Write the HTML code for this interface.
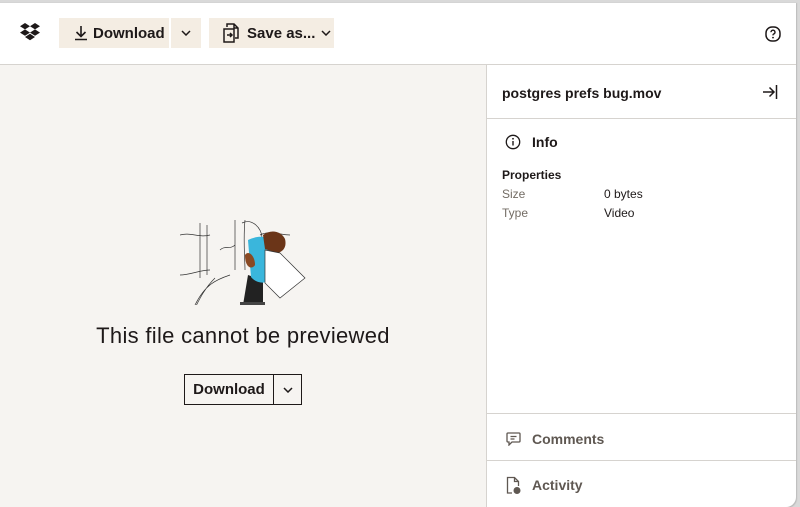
<!DOCTYPE html>
<html><head><style>
body{margin:0;width:800px;height:507px;background:#d9d9d9;font-family:"Liberation Sans",sans-serif;overflow:hidden;position:relative}
.win{position:absolute;left:0;top:2px;width:796px;height:504px;background:#fff;border-top:1px solid #d4d4d4;border-radius:0 0 10px 0;overflow:hidden;box-shadow:1px 1px 1px #bbb}
.hdr{position:absolute;left:0;top:0;right:0;height:61px;border-bottom:1px solid #d6d3cf}
.btn{position:absolute;top:15px;height:30px;background:#f4ede3;color:#1e1919;font-size:15px;font-weight:bold;display:flex;align-items:center}
.left{position:absolute;left:0;top:62px;width:486px;bottom:0;background:#f6f4f1}
.right{position:absolute;left:486px;top:62px;right:0;bottom:0;border-left:1px solid #d6d3cf}
.t{position:absolute;color:#1e1919}
.line{position:absolute;left:0;right:0;height:1px;background:#d6d3cf}
</style></head><body>
<div class="win">
<div class="hdr">
<svg style="position:absolute;left:20px;top:20px" width="21" height="19" viewBox="0 0 21 19"><g fill="#1e1919"><path d="M5 0L0 3.2 5 6.4 10 3.2zM15 0L10 3.2 15 6.4 20 3.2zM0 9.6L5 12.8 10 9.6 5 6.4zM15 6.4L10 9.6 15 12.8 20 9.6zM5 14L10 17.2 15 14 10 10.8z"/></g></svg>
<div class="btn" style="left:59px;width:110px"><svg style="margin-left:15px;margin-right:5px" width="14" height="16" viewBox="0 0 14 16"><path d="M7 1v10M2.5 7l4.5 4.5L11.5 7M1 14.5h12" stroke="#1e1919" stroke-width="1.6" fill="none"/></svg>Download</div>
<div class="btn" style="left:171px;width:30px;justify-content:center"><svg width="10" height="6"><path d="M1 1l4 4 4-4" stroke="#1e1919" stroke-width="1.5" fill="none"/></svg></div>
<div class="btn" style="left:209px;width:125px"><svg style="margin-left:13px;margin-right:7px" width="18" height="20" viewBox="0 0 18 20"><path d="M5 4V1h7l4 4v10h-3M12 1v4h4M2 6h10v13H2zM5 12h5M8 10l2 2-2 2" stroke="#1e1919" stroke-width="1.5" fill="none"/></svg>Save as...<svg style="margin-left:6px" width="10" height="6"><path d="M1 1l4 4 4-4" stroke="#1e1919" stroke-width="1.5" fill="none"/></svg></div>
<svg style="position:absolute;left:765px;top:23px" width="16" height="16" viewBox="0 0 16 16"><rect x="1" y="1" width="14" height="14" rx="6" stroke="#1e1919" stroke-width="1.5" fill="none"/><path d="M6 6.2a2 2 0 1 1 2.5 1.9c-.5.2-.5.6-.5 1.3" stroke="#1e1919" stroke-width="1.4" fill="none"/><circle cx="8" cy="11.6" r=".9" fill="#1e1919"/></svg>
</div>
<div class="left">
<svg style="position:absolute;left:180px;top:155px" width="130" height="85" viewBox="0 0 130 85">
<g stroke="#333" stroke-width=".7" fill="none"><path d="M0 15c10-3 20 3 30 0M20 3v55M27 5v50M40 30c5-5 10 0 15-5M55 0v50M62 3c10-5 20 5 20 15M65 0c-2 20 0 40 0 50M80 15c10-5 20 0 30 0M0 55c10 0 20-5 30-5M35 58c-10 10-15 20-20 30M15 85c10-20 20-25 35-30"/></g>
<path d="M68 55l15 5v25H63z" fill="#222"/>
<rect x="60" y="82" width="25" height="3" fill="#444"/>
<path d="M68 20c10-5 20-4 25 2l-2 38c-8 5-16 2-20-3z" fill="#3ab6dc"/>
<path d="M83 15c8-6 18-4 22 4 2 8-2 13-8 14l-12-4z" fill="#6b3518"/>
<path d="M85 30l15 3 25 25-25 20-15-15z" fill="#fff" stroke="#333" stroke-width=".7"/>
<path d="M65 35c3-5 10 0 10 10-3 5-10 3-10-10z" fill="#8a4a24"/>
</svg>
<div class="t" style="left:0;width:486px;text-align:center;top:258px;font-size:22px;letter-spacing:.3px">This file cannot be previewed</div>
<div style="position:absolute;left:184px;top:309px;width:116px;height:29px;border:1px solid #1e1919;display:flex;font-size:15px;font-weight:bold;color:#1e1919"><div style="width:88px;border-right:1px solid #1e1919;text-align:center;line-height:29px">Download</div><div style="flex:1;display:flex;align-items:center;justify-content:center"><svg width="10" height="6"><path d="M1 1l4 4 4-4" stroke="#1e1919" stroke-width="1.5" fill="none"/></svg></div></div>
</div>
<div class="right">
<div class="t" style="left:15px;top:20px;font-size:14px;font-weight:bold">postgres prefs bug.mov</div>
<svg style="position:absolute;left:275px;top:20px" width="16" height="14" viewBox="0 0 16 14"><path d="M1 7h11M7.5 2.5L12 7l-4.5 4.5M14.5 0v14" stroke="#1e1919" stroke-width="1.5" fill="none"/></svg>
<div class="line" style="top:53px"></div>
<svg style="position:absolute;left:18px;top:69px" width="16" height="16" viewBox="0 0 16 16"><circle cx="8" cy="8" r="6.7" stroke="#1e1919" stroke-width="1.3" fill="none"/><path d="M8 7v4.5" stroke="#1e1919" stroke-width="1.4"/><circle cx="8" cy="4.8" r=".9" fill="#1e1919"/></svg>
<div class="t" style="left:45px;top:69px;font-size:14px;font-weight:bold">Info</div>
<div class="t" style="left:15px;top:103px;font-size:12px;font-weight:bold">Properties</div>
<div class="t" style="left:15px;top:122px;font-size:12px;color:#736c64">Size</div>
<div class="t" style="left:117px;top:122px;font-size:12px">0 bytes</div>
<div class="t" style="left:15px;top:141px;font-size:12px;color:#736c64">Type</div>
<div class="t" style="left:117px;top:141px;font-size:12px">Video</div>
<div class="line" style="top:348px"></div>
<svg style="position:absolute;left:19px;top:367px" width="15" height="14" viewBox="0 0 15 14"><path d="M2 1h11a1 1 0 0 1 1 1v7a1 1 0 0 1-1 1H6l-3 3v-3H2a1 1 0 0 1-1-1V2a1 1 0 0 1 1-1zM4.5 4.5h6M4.5 7h4" stroke="#5f5852" stroke-width="1.3" fill="none"/></svg>
<div class="t" style="left:45px;top:366px;font-size:14px;font-weight:bold;color:#5f5852">Comments</div>
<div class="line" style="top:395px"></div>
<svg style="position:absolute;left:19px;top:411px" width="16" height="19" viewBox="0 0 16 19"><path d="M6 17H1.5V1.5h7l4 4V10M8.5 1.5v4h4" stroke="#5f5852" stroke-width="1.3" fill="none"/><circle cx="11" cy="14.5" r="3.5" fill="#5f5852"/></svg>
<div class="t" style="left:45px;top:412px;font-size:14px;font-weight:bold;color:#5f5852">Activity</div>
</div>
</div>
</body></html>
